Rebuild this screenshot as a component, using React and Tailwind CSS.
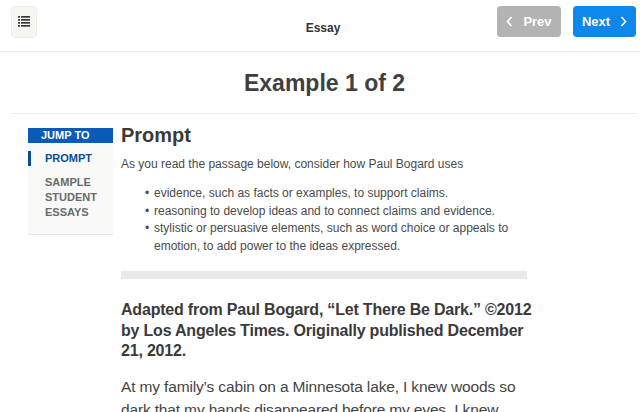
import React from 'react';

const bullets = [
  'evidence, such as facts or examples, to support claims.',
  'reasoning to develop ideas and to connect claims and evidence.',
  'stylistic or persuasive elements, such as word choice or appeals to emotion, to add power to the ideas expressed.',
];

const MenuIcon = () => (
  <svg width="12" height="11" viewBox="0 0 12 11" fill="#3a3a3a">
    <rect x="0" y="0" width="2" height="1.7" />
    <rect x="3" y="0" width="9" height="1.7" />
    <rect x="0" y="3" width="2" height="1.7" />
    <rect x="3" y="3" width="9" height="1.7" />
    <rect x="0" y="6" width="2" height="1.7" />
    <rect x="3" y="6" width="9" height="1.7" />
    <rect x="0" y="9" width="2" height="1.7" />
    <rect x="3" y="9" width="9" height="1.7" />
  </svg>
);

const Chevron = ({ left }) => (
  <svg width="7" height="11" viewBox="0 0 7 11" fill="none" stroke="white" strokeWidth="1.6">
    {left ? <path d="M5.5 1 L1.5 5.5 L5.5 10" /> : <path d="M1.5 1 L5.5 5.5 L1.5 10" />}
  </svg>
);

export default function App() {
  return (
    <div className="w-[640px] h-[412px] overflow-hidden bg-white text-[#444]" style={{ fontFamily: '"Liberation Sans", Arial, sans-serif' }}>
      <header className="h-[52px] border-b border-[#ececec] flex items-center px-[11px]">
        <button className="w-[26px] h-[32px] -mt-[8px] bg-[#f6f6f3] border border-[#ececea] rounded-sm flex items-center justify-center">
          <MenuIcon />
        </button>
        <div className="flex-1 text-center text-[12px] font-bold text-[#333] pl-[112px] pt-[4px]">Essay</div>
        <div className="flex gap-[12px] -mt-[8px] -mr-[7px]">
          <button className="w-[64px] h-[31px] bg-[#b3b3b3] text-white text-[13px] font-bold flex items-center justify-center gap-[10px] rounded-sm">
            <Chevron left />
            <span>Prev</span>
          </button>
          <button className="w-[63px] h-[31px] bg-[#0d87e9] text-white text-[13px] font-bold flex items-center justify-center gap-[10px] rounded-sm">
            <span>Next</span>
            <Chevron />
          </button>
        </div>
      </header>

      <div className="h-[61px] flex items-center justify-center pl-[9px]">
        <h1 className="text-[23px] font-bold text-[#404040] mt-[1px]">Example 1 of 2</h1>
      </div>
      <div className="ml-[11px] mr-[3px] border-t border-[#ececec]" />

      <div className="flex gap-[8px] pl-[28px] pt-[14px]">
        <aside className="w-[85px] shrink-0">
          <div className="bg-[#0a5ab8] text-white text-[11px] font-bold h-[15px] leading-[15px] pl-[13px]">JUMP TO</div>
          <div className="bg-[#f9f9f8] border-b border-[#e6e6e6] pt-[8px] pb-[14px]">
            <div className="border-l-[3px] border-[#0b4c96] pl-[14px] text-[11px] font-bold text-[#0b4c96] leading-[15px]">PROMPT</div>
            <div className="pl-[17px] mt-[9px] text-[11px] font-bold text-[#6a6a6a] leading-[15px]">
              SAMPLE<br />STUDENT<br />ESSAYS
            </div>
          </div>
        </aside>

        <main className="w-[406px]">
          <h2 className="text-[20px] font-bold text-[#3a3a3a] leading-[24px] -mt-[5px]">Prompt</h2>
          <p className="text-[12px] leading-[17px] text-[#4a4a4a] mt-[9px]">As you read the passage below, consider how Paul Bogard uses</p>
          <ul className="mt-[12px] pl-[24px] text-[12px] leading-[17.5px] text-[#4a4a4a]">
            {bullets.map((b) => (
              <li key={b} className="flex">
                <span className="w-[9px] shrink-0">•</span>
                <span>{b}</span>
              </li>
            ))}
          </ul>
          <div className="mt-[16px] h-[8px] bg-[#e8e8e4]" />
          <p className="mt-[21px] text-[16px] font-bold leading-[20.5px] tracking-[-0.2px] text-[#3a3a3a] -mr-[12px]">
            Adapted from Paul Bogard, “Let There Be Dark.” ©2012 by Los Angeles Times. Originally published December 21, 2012.
          </p>
          <p className="mt-[13px] text-[15.5px] leading-[23px] tracking-[-0.15px] text-[#444]">
            At my family’s cabin on a Minnesota lake, I knew woods so dark that my hands disappeared before my eyes. I knew night skies in which meteors left smoky trails across sky-wide mountains of stars.
          </p>
        </main>
      </div>
    </div>
  );
}
